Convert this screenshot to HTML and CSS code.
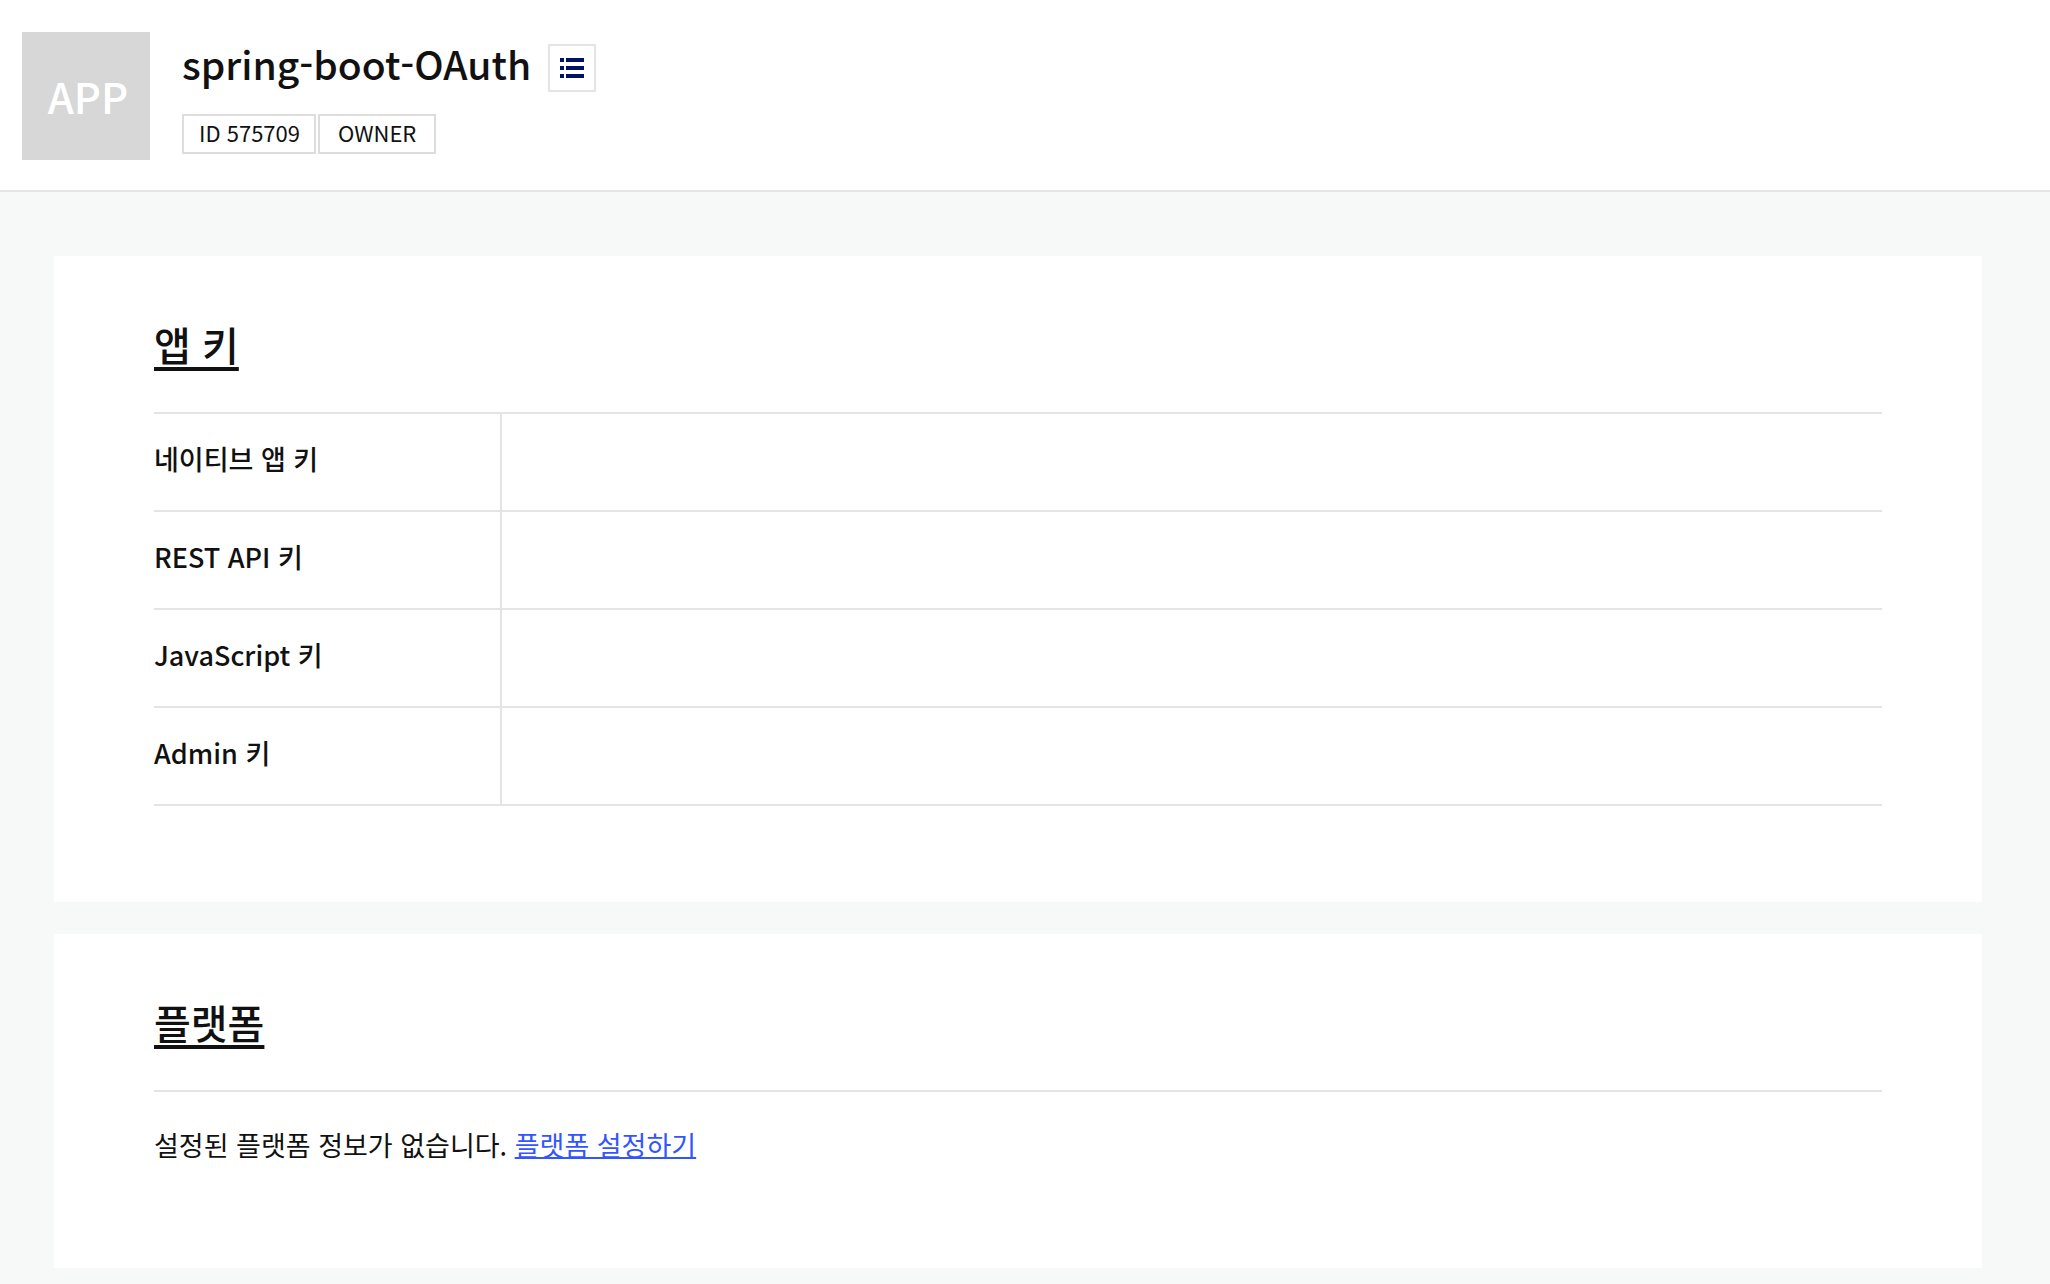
FILE: index.html
```html
<!DOCTYPE html>
<html lang="ko">
<head>
<meta charset="utf-8">
<meta name="viewport" content="width=device-width, initial-scale=1">
<title>spring-boot-OAuth</title>
<link rel="stylesheet" href="styles.css">
</head>
<body>
<header class="app-header">
  <div class="app-icon">APP</div>
  <div class="app-info">
    <div class="title-row">
      <h1 class="app-name">spring-boot-OAuth</h1>
      <button class="list-button" type="button" aria-label="앱 목록">
        <svg class="list-icon" viewBox="0 0 24 20" aria-hidden="true"><path d="M0 0h4v4H0zM6 0h18v4H6zM0 8h4v4H0zM6 8h18v4H6zM0 16h4v4H0zM6 16h18v4H6z"/></svg>
      </button>
    </div>
    <div class="tags"><span class="tag tag-id">ID 575709</span><span class="tag tag-role">OWNER</span></div>
  </div>
</header>
<main class="content">
  <section class="card">
    <h2 class="card-title"><a class="title-link" href="#keys">앱 키</a></h2>
    <table class="keys">
      <tbody>
        <tr><th scope="row">네이티브 앱 키</th><td></td></tr>
        <tr><th scope="row">REST API 키</th><td></td></tr>
        <tr><th scope="row">JavaScript 키</th><td></td></tr>
        <tr><th scope="row">Admin 키</th><td></td></tr>
      </tbody>
    </table>
  </section>
  <section class="card">
    <h2 class="card-title"><a class="title-link" href="#platform">플랫폼</a></h2>
    <p class="empty">설정된 플랫폼 정보가 없습니다. <a class="link" href="#platform-settings">플랫폼 설정하기</a></p>
  </section>
</main>
</body>
</html>
```

FILE: styles.css
```css
* { box-sizing: border-box; }

body {
  margin: 0;
  min-height: 100vh;
  background: #f7f9f8;
  color: #111;
  font-family: "Noto Sans CJK KR", sans-serif;
}

.app-header {
  display: flex;
  gap: 32px;
  padding: 32px 22px 30px;
  background: #fff;
  border-bottom: 2px solid #e4e4e4;
}

.app-icon {
  display: flex;
  align-items: center;
  justify-content: center;
  width: 128px;
  height: 128px;
  padding: 0 0 2px 4px;
  background: #d7d7d7;
  color: #fff;
  font-size: 42px;
  font-weight: 500;
}

.title-row {
  display: flex;
  align-items: flex-start;
  gap: 17px;
  height: 70px;
}

.app-name {
  margin: 0;
  font-size: 39px;
  font-weight: 500;
  line-height: 62px;
}

.list-button {
  display: flex;
  align-items: center;
  justify-content: center;
  width: 48px;
  height: 48px;
  margin-top: 12px;
  padding: 0;
  background: #fff;
  border: 2px solid #e4e4e4;
}

.list-icon { width: 24px; height: 20px; fill: #001166; }

.tags { display: flex; gap: 2px; margin-top: 12px; }

.tag {
  height: 40px;
  border: 2px solid #ddd;
  font-size: 22px;
  line-height: 32px;
}

.tag-id { padding: 0 14px 0 15px; }

.tag-role { padding: 0 18px; }

.content {
  display: grid;
  gap: 32px;
  padding: 64px 68px 16px 54px;
}

.card { padding: 60px 100px 96px; background: #fff; }

.card-title {
  margin: 0 0 40px;
  font-size: 40px;
  font-weight: 500;
  line-height: 56px;
}

.title-link {
  color: inherit;
  text-decoration: underline;
  text-decoration-skip-ink: none;
  text-decoration-thickness: 4px;
  text-underline-offset: 6px;
}

.keys {
  width: 100%;
  border-collapse: collapse;
}

.keys th, .keys td {
  height: 98px;
  padding: 0 0 8px;
  border-top: 2px solid #e4e4e4;
  border-bottom: 2px solid #e4e4e4;
}

.keys th {
  width: 347px;
  border-right: 2px solid #e4e4e4;
  font-size: 27px;
  font-weight: 500;
  text-align: left;
}

.empty {
  margin: 0;
  padding: 31px 0 5px;
  border-top: 2px solid #e4e4e4;
  font-size: 27px;
  line-height: 44px;
}

.link {
  color: #3355ff;
  text-decoration: underline;
  text-decoration-skip-ink: none;
  text-decoration-thickness: 2px;
}
```
